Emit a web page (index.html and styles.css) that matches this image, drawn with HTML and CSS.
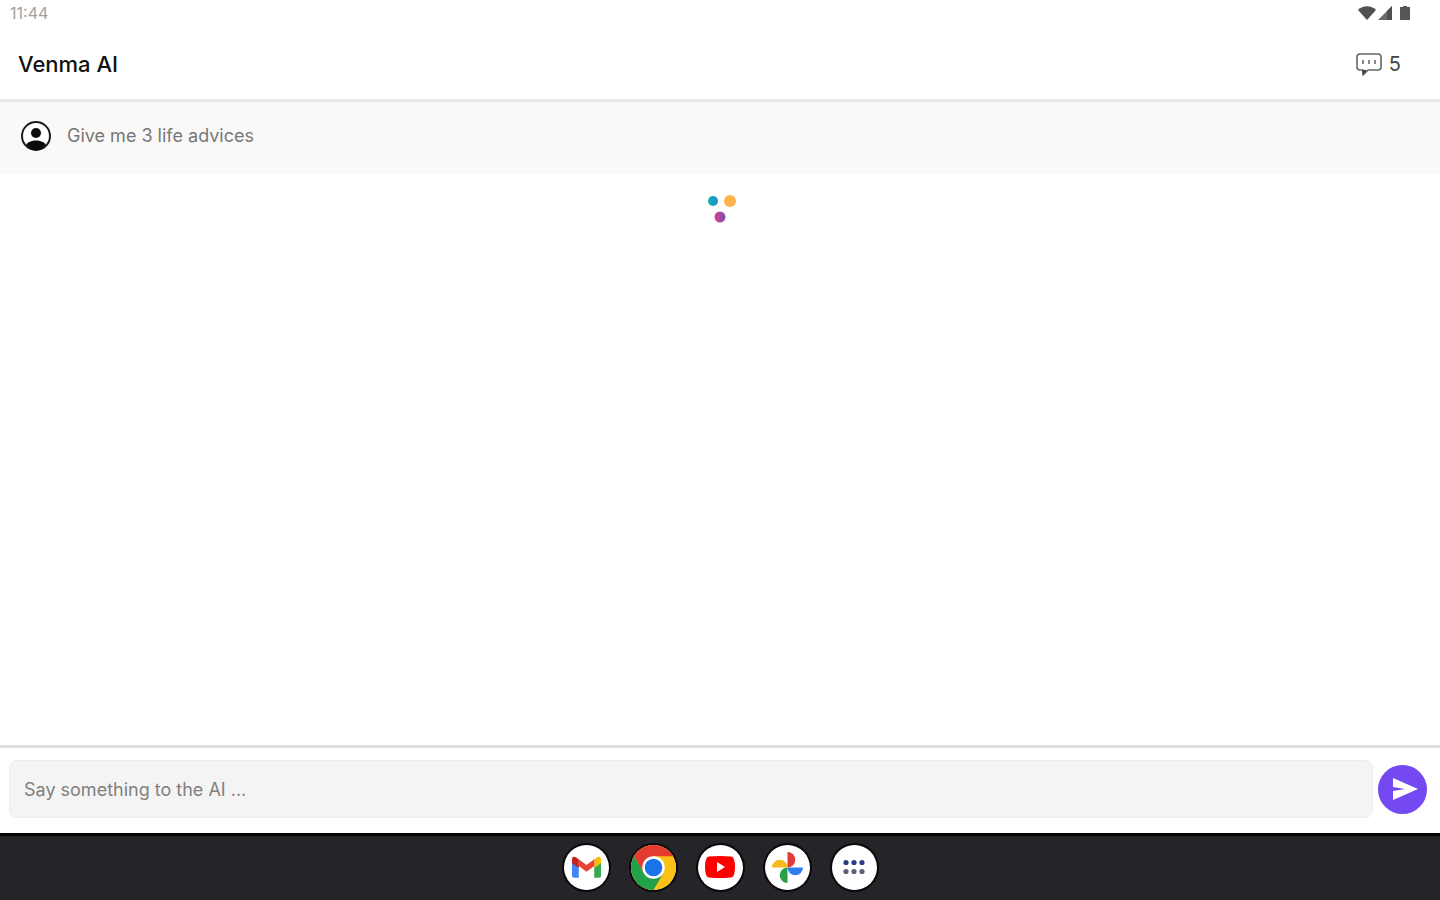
FILE: index.html
```html
<!DOCTYPE html>
<html lang="en">
<head>
    <meta charset="UTF-8">
    <meta name="viewport" content="width=device-width, initial-scale=1.0">
    <title>Venma AI</title>
    <link rel="stylesheet" href="styles.css">
</head>
<body>
    <div class="status-bar">
        <span class="clock">11:44</span>
        <div class="status-icons">
            <svg width="18" height="14" viewBox="0 0 18 14"><path d="M0 4C5-1 13-1 18 4L9 14Z" fill="#505050"/></svg>
            <svg width="14" height="14" viewBox="0 0 14 14"><path d="M0 14L14 0V14Z" fill="#6c6c6c"/><path d="M9 5L14 0V14H9Z" fill="#505050"/></svg>
            <svg class="battery" width="10" height="14" viewBox="0 0 10 14"><path d="M3 0H7V1H10V14H0V1H3Z" fill="#555"/></svg>
        </div>
    </div>

    <header class="header">
        <h1 class="title">Venma AI</h1>
        <div class="credits">
            <svg width="26" height="24" viewBox="0 0 26 24">
                <path d="M4 2H22Q25 2 25 5V15Q25 18 22 18H12L7 23V18H4Q1 18 1 15V5Q1 2 4 2Z" fill="none" stroke="#666" stroke-width="1.6" stroke-linejoin="round"/>
                <path d="M6 18H11L7 23Z" fill="#404040"/>
                <path d="M7 8V12M13 8V12M19 8V12" stroke="#888" stroke-width="2"/>
            </svg>
            <span>5</span>
        </div>
    </header>

    <main class="chat">
        <div class="message">
            <svg width="30" height="30" viewBox="0 0 30 30">
                <circle cx="15" cy="15" r="14" fill="#fff" stroke="#1c1c1c" stroke-width="2"/>
                <circle cx="15" cy="12" r="5" fill="#0c0c0c"/>
                <path d="M5 24C8 18 22 18 25 24C19 31 11 31 5 24Z" fill="#0c0c0c"/>
            </svg>
            <p>Give me 3 life advices</p>
        </div>
        <svg class="loader" width="32" height="32" viewBox="0 0 32 32">
            <defs>
                <linearGradient id="blue"><stop offset="0" stop-color="#12b5a8"/><stop offset="1" stop-color="#1490d8"/></linearGradient>
                <linearGradient id="pink"><stop offset="0" stop-color="#d8408a"/><stop offset="1" stop-color="#7a50b8"/></linearGradient>
            </defs>
            <circle cx="9" cy="9" r="5" fill="url(#blue)"/>
            <circle cx="26" cy="9" r="6" fill="#ffb14c"/>
            <circle cx="16" cy="25" r="5.5" fill="url(#pink)"/>
        </svg>
    </main>

    <form class="composer">
        <input class="prompt" type="text" placeholder="Say something to the AI ..." aria-label="Message">
        <button class="send" type="button" aria-label="Send">
            <svg width="26" height="22" viewBox="0 0 26 22"><path d="M1 0L26 11L1 22V13L13 11L1 9Z" fill="#fff"/></svg>
        </button>
    </form>

    <nav class="dock">
        <a class="app" href="#" aria-label="Gmail">
            <svg width="29" height="22" viewBox="0 0 30 22">
                <path d="M0 3V20Q0 22 2 22H7V9Z" fill="#4285f4"/>
                <path d="M30 3V20Q30 22 28 22H23V9Z" fill="#34a853"/>
                <path d="M23 3L26 1Q30-1 30 4V7L23 12Z" fill="#fbbc04"/>
                <path d="M7 3L4 1Q0-1 0 4V7L7 12Z" fill="#c5221f"/>
                <path d="M7 3L15 9L23 3V10L15 16L7 10Z" fill="#ea4335"/>
            </svg>
        </a>
        <a class="app" href="#" aria-label="Chrome">
            <svg width="45" height="45" viewBox="0 0 46 46">
                <circle cx="23" cy="23" r="23" fill="#fbc116"/>
                <path d="M3.1 11.5A23 23 0 0 1 42.9 11.5H23L13 28.7Z" fill="#e33b2e"/>
                <path d="M3.1 11.5A23 23 0 0 0 23 46L33 28.7L23 34.5L13 28.7Z" fill="#22a04a"/>
                <circle cx="23" cy="23" r="11.5" fill="#fff"/>
                <circle cx="23" cy="23" r="9" fill="#1a73e8"/>
            </svg>
        </a>
        <a class="app" href="#" aria-label="YouTube">
            <svg width="30" height="22" viewBox="0 0 30 22">
                <path d="M4 .5Q15-.5 26 .5Q30 1 30 11T26 21.5Q15 22.5 4 21.5Q0 21 0 11T4 .5Z" fill="#f00"/>
                <path d="M12 6L20 11L12 16Z" fill="#fff"/>
            </svg>
        </a>
        <a class="app" href="#" aria-label="Photos">
            <svg width="31" height="31" viewBox="0 0 32 32">
                <path d="M16 0A8 8 0 0 1 16 16Z" fill="#e33b36"/>
                <path d="M32 16A8 8 0 0 1 16 16Z" fill="#2f7cf0"/>
                <path d="M16 32A8 8 0 0 1 16 16Z" fill="#27a048"/>
                <path d="M0 16A8 8 0 0 1 16 16Z" fill="#f9bb1c"/>
            </svg>
        </a>
        <a class="app" href="#" aria-label="All apps">
            <svg width="22" height="16" viewBox="0 0 22 16">
                <g fill="#2b3a86"><circle cx="3" cy="3.5" r="2.6"/><circle cx="11" cy="3.5" r="2.6"/><circle cx="19" cy="3.5" r="2.6"/></g>
                <g fill="#5c6070"><circle cx="3" cy="12.5" r="2.6"/><circle cx="11" cy="12.5" r="2.6"/><circle cx="19" cy="12.5" r="2.6"/></g>
            </svg>
        </a>
    </nav>
</body>
</html>
```
FILE: styles.css
```css
* {
    box-sizing: border-box;
}
body {
    font-family: Inter, sans-serif;
    display: flex;
    flex-direction: column;
    min-height: 100vh;
    margin: 0;
    background-color: #fff;
    color: #111;
}
svg {
    display: block;
    flex-shrink: 0;
}
.status-bar {
    display: flex;
    justify-content: space-between;
    align-items: center;
    height: 28px;
    padding: 0 30px 2px 10px;
}
.clock {
    font-size: 16px;
    color: #a0a0a0;
}
.status-icons {
    display: flex;
    align-items: center;
    gap: 2px;
}
.battery {
    margin-left: 6px;
}
.header {
    display: flex;
    justify-content: space-between;
    align-items: center;
    height: 74px;
    padding: 0 39px 0 18px;
    border-bottom: 3px solid #ebe9ea;
}
.title {
    margin: 0;
    font-size: 22px;
    font-weight: 500;
}
.credits {
    display: flex;
    align-items: center;
    gap: 7px;
    font-size: 20px;
    color: #444;
}
.chat {
    flex: 1;
}
.message {
    display: flex;
    align-items: center;
    gap: 16px;
    height: 72px;
    padding: 0 21px 4px;
    background-color: #faf9f7;
    font-size: 18px;
    color: #777;
}
.message p {
    margin: 0 0 2px;
}
.loader {
    margin: 18px auto 0;
}
.composer {
    display: flex;
    align-items: center;
    gap: 5px;
    padding: 12px 13px 15px 9px;
    border-top: 3px solid #dfdfdf;
}
.prompt {
    flex: 1;
    min-width: 0;
    height: 58px;
    padding: 0 14px;
    border: 1px solid #ececec;
    border-radius: 8px;
    background-color: #f4f4f4;
    font-family: inherit;
    font-size: 18px;
    color: #333;
}
.prompt::placeholder {
    color: #808080;
}
.send {
    display: flex;
    justify-content: center;
    align-items: center;
    width: 49px;
    height: 49px;
    padding: 0 0 0 4px;
    border: none;
    border-radius: 50%;
    background-color: #7449f2;
    cursor: pointer;
}
.dock {
    display: flex;
    justify-content: center;
    align-items: center;
    gap: 22px;
    height: 67px;
    padding-bottom: 2px;
    border-top: 3px solid #050505;
    background-color: #252529;
}
.app {
    display: flex;
    justify-content: center;
    align-items: center;
    width: 45px;
    height: 45px;
    border-radius: 50%;
    background-color: #fff;
    box-shadow: 0 0 0 2px #0a0a0c;
}
```
